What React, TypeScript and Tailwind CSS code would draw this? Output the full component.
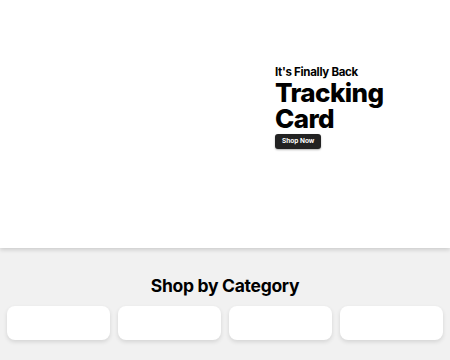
export default function App() {
  return (
    <main className="w-[450px] h-[360px] overflow-hidden bg-[#f1f1f1] font-['Inter',sans-serif] text-black">
      <section className="h-[248px] bg-white shadow-[0_2px_4px_rgba(0,0,0,0.15)] flex">
        <div className="w-[275px]" />
        <div className="pt-[64px] flex flex-col items-start">
          <p className="text-[11.5px] font-bold leading-[16px] tracking-[-0.3px]">It's Finally Back</p>
          <h1 className="text-[26px] font-extrabold leading-[26px] tracking-[-0.6px]">
            <span className="block">Tracking</span>
            <span className="block">Card</span>
          </h1>
          <button className="mt-[2px] h-[15px] px-[7px] rounded-[3px] bg-[#222] text-white text-[6.5px] font-bold leading-none shadow-[0_1px_2px_rgba(0,0,0,0.3)]">
            Shop Now
          </button>
        </div>
      </section>
      <h2 className="mt-[26px] text-center text-[17.5px] font-bold tracking-[-0.3px] leading-[24px]">
        Shop by Category
      </h2>
      <div className="mt-[8px] px-[7px] grid grid-cols-4 gap-[8px]">
        {[1, 2, 3, 4].map(n => (
          <div key={n} className="h-[34px] rounded-[8px] bg-white shadow-[0_2px_4px_rgba(0,0,0,0.12)]" />
        ))}
      </div>
    </main>
  );
}
